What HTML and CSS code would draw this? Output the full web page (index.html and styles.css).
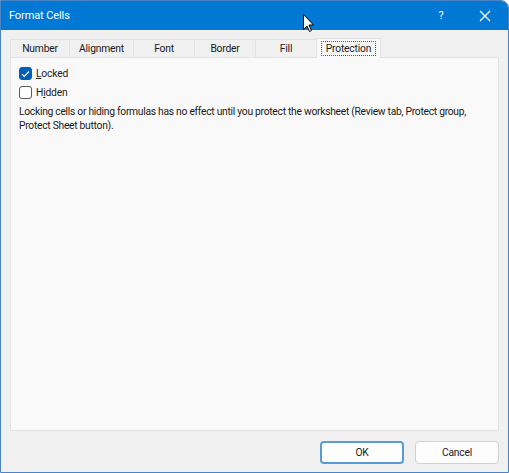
FILE: index.html
```html
<!DOCTYPE html>
<html>
<head>
<meta charset="utf-8">
<link rel="stylesheet" href="styles.css">
</head>
<body>
<div class="window">
  <div class="titlebar">
    <span class="title">Format Cells</span>
    <span class="tb-help">?</span>
    <span class="tb-close">
      <svg width="12" height="12" viewBox="0 0 12 12"><path d="M1 1L11 11M11 1L1 11" stroke="#fff" stroke-width="1.2" fill="none"/></svg>
    </span>
    <svg class="cursor" width="12" height="18" viewBox="0 0 12 18"><path d="M0.5 0.5V15.5L4 12L6.5 17.5L8.5 16.5L6 11H10.5Z" fill="#fff" stroke="#000" stroke-width="1"/></svg>
  </div>
  <div class="body">
    <div class="tabs">
      <div class="tab t1">Number</div>
      <div class="tab t2">Alignment</div>
      <div class="tab t3">Font</div>
      <div class="tab t4">Border</div>
      <div class="tab t5">Fill</div>
      <div class="tab active"><span class="focus">Protection</span></div>
    </div>
    <div class="panel">
      <label class="check">
        <span class="box checked"><svg width="9" height="8" viewBox="0 0 9 8"><path d="M1 4.2L3.3 6.5L8 1.5" stroke="#fff" stroke-width="1.2" fill="none"/></svg></span>
        <span><u>L</u>ocked</span>
      </label>
      <label class="check">
        <span class="box"></span>
        <span>H<u>i</u>dden</span>
      </label>
      <p class="note">Locking cells or hiding formulas has no effect until you protect the worksheet (Review tab, Protect group, Protect Sheet button).</p>
    </div>
    <div class="buttons">
      <button class="btn primary">OK</button>
      <button class="btn">Cancel</button>
    </div>
  </div>
</div>
</body>
</html>
```
FILE: styles.css
```css
html, body { margin: 0; padding: 0; }
body {
  width: 509px;
  height: 473px;
  overflow: hidden;
  font-family: Roboto, "Noto Sans", sans-serif;
  font-size: 10.3px;
  letter-spacing: -0.2px;
  color: #1a1a1a;
  background: #fff;
}
.window {
  width: 509px;
  height: 473px;
  box-sizing: border-box;
  border: 1px solid #4a84c4;
  border-radius: 0 8px 0 0;
  overflow: hidden;
  display: flex;
  flex-direction: column;
  background: #f0f0f0;
}
.titlebar {
  height: 29px;
  flex: none;
  background: #0078d4;
  color: #fff;
  display: flex;
  align-items: center;
  position: relative;
}
.title {
  margin-left: 8px;
  font-size: 11px;
  letter-spacing: -0.1px;
  flex: 1;
}
.tb-help {
  width: 46px;
  text-align: center;
  font-size: 11px;
  margin-right: -2px;
}
.tb-close {
  width: 46px;
  display: flex;
  justify-content: center;
  align-items: center;
}
.cursor {
  position: absolute;
  left: 302px;
  top: 13px;
}
.body {
  flex: 1;
  display: flex;
  flex-direction: column;
  padding: 8px 9px 0 9px;
}
.tabs {
  display: flex;
  height: 19px;
  align-items: flex-end;
  position: relative;
  z-index: 1;
}
.tab {
  height: 18px;
  box-sizing: border-box;
  border: 1px solid #e3e3e3;
  border-bottom: none;
  border-right: none;
  background: #f0f0f0;
  text-align: center;
  line-height: 18px;
}
.t1 { width: 59px; }
.t2 { width: 64px; }
.t3 { width: 61px; }
.t4 { width: 61px; }
.t5 { width: 61px; }
.tab.active {
  width: 65px;
  height: 20px;
  margin-bottom: -1px;
  background: #f9f9f9;
  border: 1px solid #e3e3e3;
  border-bottom: none;
  display: flex;
  align-items: center;
  justify-content: center;
}
.focus {
  display: block;
  border: 1px dotted #555;
  padding: 0 4px;
  line-height: 13px;
  margin-top: -1px;
}
.panel {
  height: 374px;
  box-sizing: border-box;
  background: #f9f9f9;
  border: 1px solid #e3e3e3;
  padding: 9px 8px 0 8px;
}
.check {
  display: flex;
  align-items: center;
  gap: 4px;
  height: 13px;
  margin-bottom: 6px;
}
.box {
  width: 13px;
  height: 13px;
  box-sizing: border-box;
  border: 1px solid #5a5a5a;
  border-radius: 3px;
  background: #fff;
  display: flex;
  align-items: center;
  justify-content: center;
}
.box.checked {
  background: #005fb8;
  border-color: #005fb8;
}
.note {
  margin: 3px 0 0 0;
  line-height: 14px;
  letter-spacing: -0.28px;
}
.buttons {
  display: flex;
  justify-content: flex-end;
  gap: 11px;
  padding-top: 10px;
}
.btn {
  width: 84px;
  height: 23px;
  box-sizing: border-box;
  border: 1px solid #d0d0d0;
  border-radius: 4px;
  background: #fdfdfd;
  font-family: inherit;
  font-size: 10.3px;
  letter-spacing: -0.2px;
  color: #1a1a1a;
  padding: 0;
}
.btn.primary {
  border: 2px solid #5b9bd5;
  background: #fdfdfd;
}
```
